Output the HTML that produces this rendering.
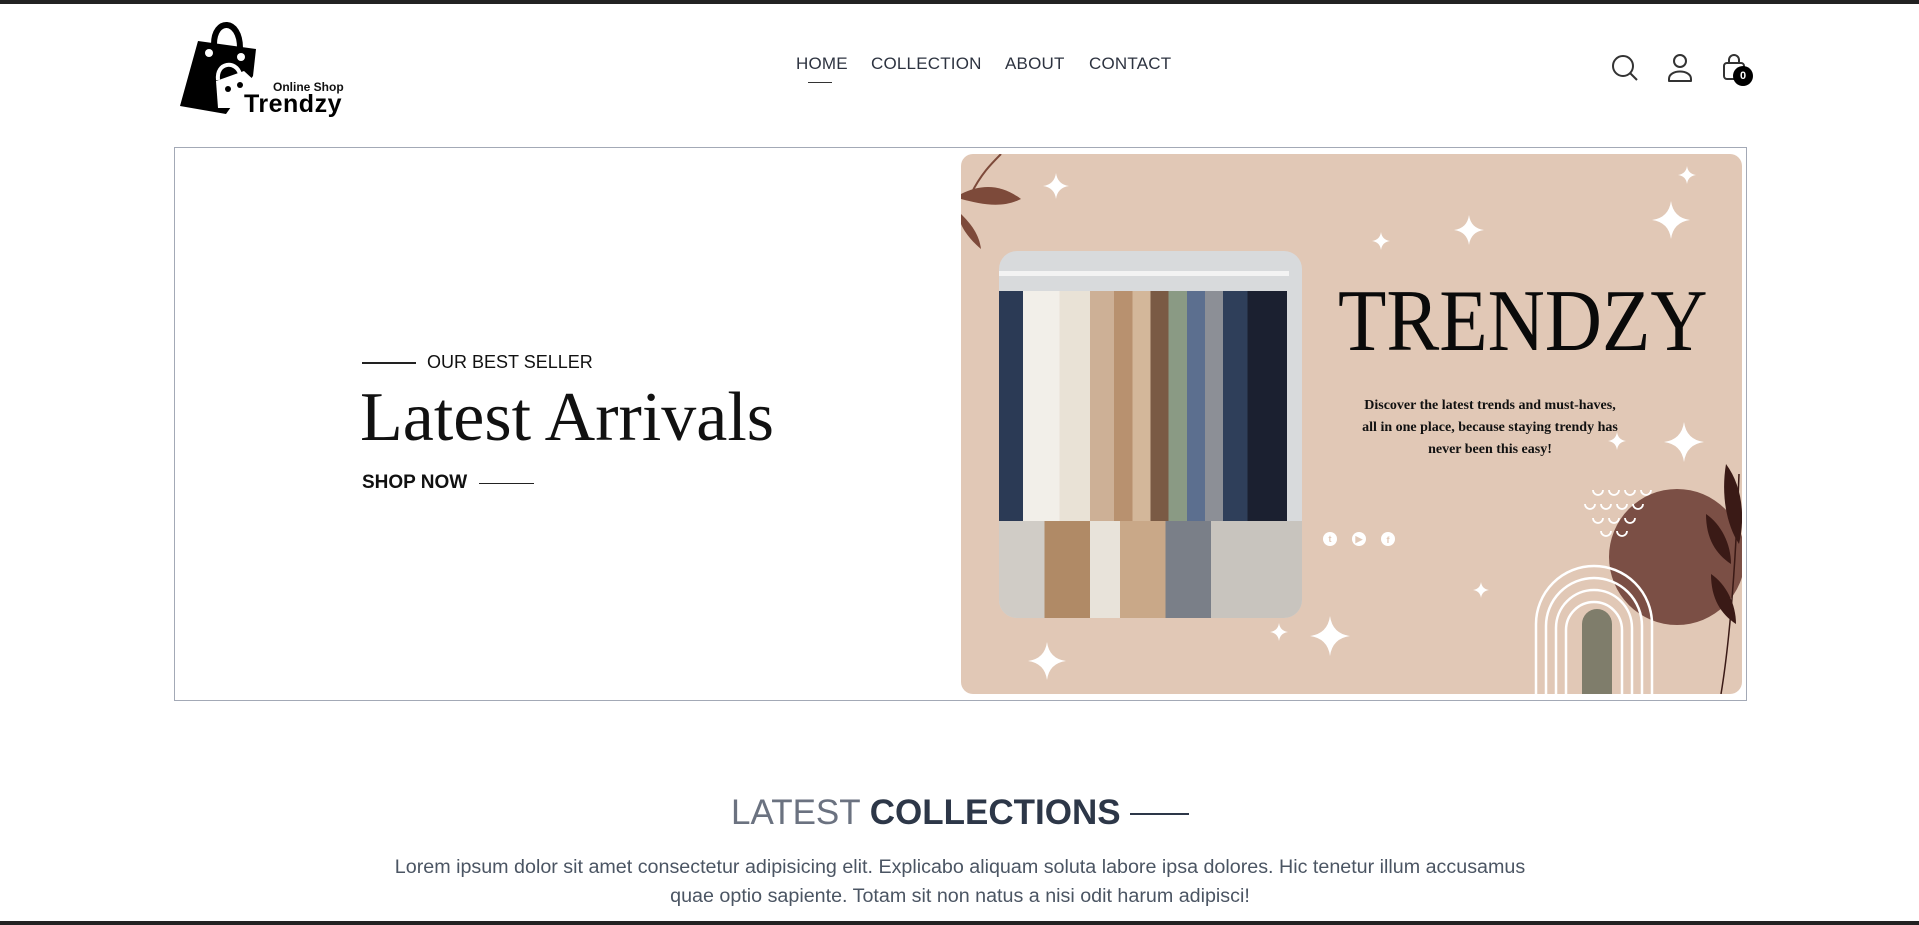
<!DOCTYPE html>
<html><head><meta charset="utf-8"><style>
*{margin:0;padding:0;box-sizing:border-box}
body{width:1919px;height:925px;background:#fff;position:relative;overflow:hidden;font-family:"Liberation Sans",sans-serif}
.a{position:absolute}
.nav{top:54px;font-size:17px;color:#2d3340;letter-spacing:0.2px}
</style></head><body>
<div class="a" style="left:0;top:0;width:1919px;height:4px;background:#222"></div>
<div class="a" style="left:0;top:921px;width:1919px;height:4px;background:#222"></div>

<!-- logo -->
<svg class="a" style="left:178px;top:16px" width="180" height="105" viewBox="0 0 180 105">
 <path d="M20 25 L78 33 L75 60 L48 98 L2 90 Z" fill="#000"/>
 <path d="M36 28 C36 2 62 2 62 32" stroke="#000" stroke-width="6" fill="none"/>
 <circle cx="31" cy="37" r="4" fill="#fff"/><circle cx="63" cy="41" r="4" fill="#fff"/>
 <path d="M38 65 L66 55 L78 66 L62 92 L40 92 Z" fill="#fff"/>
 <path d="M40 64 C38 46 58 44 62 58" stroke="#fff" stroke-width="4" fill="none"/>
 <circle cx="50" cy="73" r="3" fill="#000"/><circle cx="62" cy="69" r="3" fill="#000"/>
</svg>
<div class="a" style="left:273px;top:80px;font-size:12px;font-weight:bold;color:#111">Online Shop</div>
<div class="a" style="left:244px;top:90px;font-size:25px;font-weight:bold;color:#000;letter-spacing:0.5px">Trendzy</div>

<div class="a nav" style="left:796px">HOME</div>
<div class="a" style="left:808px;top:82px;width:24px;height:1px;background:#333"></div>
<div class="a nav" style="left:871px">COLLECTION</div>
<div class="a nav" style="left:1005px">ABOUT</div>
<div class="a nav" style="left:1089px">CONTACT</div>

<svg class="a" style="left:1610px;top:53px" width="30" height="30" viewBox="0 0 30 30"><circle cx="13" cy="13" r="10" stroke="#333" stroke-width="2" fill="none"/><path d="M20 20 L27 27" stroke="#333" stroke-width="2"/></svg>
<svg class="a" style="left:1666px;top:52px" width="28" height="32" viewBox="0 0 28 32"><circle cx="14" cy="9" r="6" stroke="#333" stroke-width="2" fill="none"/><path d="M3 27 C3 17 25 17 25 27 L25 29 L3 29 Z" stroke="#333" stroke-width="2" fill="none" stroke-linejoin="round"/></svg>
<svg class="a" style="left:1721px;top:52px" width="26" height="30" viewBox="0 0 26 30"><path d="M8 11 V8 a5 5 0 0 1 10 0 V11" stroke="#333" stroke-width="2" fill="none"/><rect x="3" y="11" width="20" height="16" rx="3" stroke="#333" stroke-width="2" fill="none"/></svg>
<div class="a" style="left:1733px;top:66px;width:20px;height:20px;border-radius:50%;background:#000;color:#fff;font-size:11px;font-weight:bold;text-align:center;line-height:20px">0</div>

<!-- hero -->
<div class="a" style="left:174px;top:147px;width:1573px;height:554px;border:1px solid #a3a9b6"></div>
<div class="a" style="left:362px;top:362px;width:54px;height:2px;background:#222"></div>
<div class="a" style="left:427px;top:352px;font-size:18px;color:#111">OUR BEST SELLER</div>
<div class="a" style="left:360px;top:378px;font-family:'Liberation Serif',serif;font-size:70px;color:#111">Latest Arrivals</div>
<div class="a" style="left:362px;top:472px;font-size:19px;font-weight:bold;color:#111">SHOP NOW</div>
<div class="a" style="left:479px;top:483px;width:55px;height:1px;background:#222"></div>

<div class="a" style="left:961px;top:154px;width:781px;height:540px;background:#e1c8b6;border-radius:12px;overflow:hidden">
 <div class="a" style="left:38px;top:97px;width:303px;height:367px;border-radius:18px;overflow:hidden;background:#d8dadc">
  <div class="a" style="left:0;top:20px;width:290px;height:5px;background:#f3f3f3"></div>
  <div class="a" style="left:0;top:40px;width:303px;height:240px;background:linear-gradient(90deg,#2b3a55 0 8%,#f2efe9 8% 20%,#e9e2d6 20% 30%,#cdb096 30% 38%,#b8916f 38% 44%,#d3b79a 44% 50%,#7a5a44 50% 56%,#8a9a84 56% 62%,#5c6f8f 62% 68%,#8c8f96 68% 74%,#2f3f5a 74% 82%,#1b2030 82% 95%,#d8dadc 95%)"></div>
  <div class="a" style="left:0;top:270px;width:303px;height:97px;background:linear-gradient(90deg,#d0ccc6 0 15%,#b08a66 15% 30%,#e8e3da 30% 40%,#c9a888 40% 55%,#7a7f88 55% 70%,#c8c4be 70%)"></div>
 </div>
 <div class="a" style="left:377px;top:124px;font-family:'Liberation Serif',serif;font-size:88px;color:#0a0a0a;transform:scaleX(0.9);transform-origin:left top;line-height:1">TRENDZY</div>
 <div class="a" style="left:379px;top:241px;width:300px;text-align:center;font-family:'Liberation Serif',serif;font-weight:bold;font-size:14px;line-height:22px;color:#111">Discover the latest trends and must-haves,<br>all in one place, because staying trendy has<br>never been this easy!</div>
 <svg class="a" style="left:0;top:0" width="781" height="540" viewBox="0 0 781 540">
  <defs><path id="s" d="M0 -1 Q0.12 -0.12 1 0 Q0.12 0.12 0 1 Q-0.12 0.12 -1 0 Q-0.12 -0.12 0 -1Z"/></defs>
  <g fill="#fff">
   <use href="#s" transform="translate(95,32) scale(13)"/>
   <use href="#s" transform="translate(508,76) scale(15)"/>
   <use href="#s" transform="translate(710,66) scale(19)"/>
   <use href="#s" transform="translate(726,21) scale(9)"/>
   <use href="#s" transform="translate(420,87) scale(9)"/>
   <use href="#s" transform="translate(723,288) scale(20)"/>
   <use href="#s" transform="translate(656,287) scale(9)"/>
   <use href="#s" transform="translate(86,507) scale(19)"/>
   <use href="#s" transform="translate(369,482) scale(20)"/>
   <use href="#s" transform="translate(318,478) scale(9)"/>
   <use href="#s" transform="translate(520,436) scale(8)"/>
  </g>
  <path d="M0 40 C20 30 40 30 60 45 C40 55 20 50 0 45Z" fill="#7d4a3a"/>
  <path d="M0 60 C10 70 18 80 20 95 C8 85 2 75 0 70Z" fill="#7d4a3a"/>
  <path d="M10 40 C20 20 30 10 40 0" stroke="#7d4a3a" stroke-width="2" fill="none"/>
  <circle cx="716" cy="403" r="68" fill="#7b4f45"/>
  <g stroke="#fff" stroke-width="2.5" fill="none">
   <path d="M575 540 V470 a58 58 0 0 1 116 0 V540"/>
   <path d="M585 540 V472 a48 48 0 0 1 96 0 V540"/>
   <path d="M595 540 V474 a38 38 0 0 1 76 0 V540"/>
   <path d="M605 540 V476 a28 28 0 0 1 56 0 V540"/>
  </g>
  <path d="M621 540 V470 a15 15 0 0 1 30 0 V540Z" fill="#7f7d6b"/>
  <g stroke="#fff" stroke-width="1.8" fill="none">
   <path d="M632 336 a5 5 0 0 0 10 0 M648 336 a5 5 0 0 0 10 0 M664 336 a5 5 0 0 0 10 0 M680 336 a5 5 0 0 0 10 0"/>
   <path d="M624 350 a5 5 0 0 0 10 0 M640 350 a5 5 0 0 0 10 0 M656 350 a5 5 0 0 0 10 0 M672 350 a5 5 0 0 0 10 0"/>
   <path d="M632 364 a5 5 0 0 0 10 0 M648 364 a5 5 0 0 0 10 0 M664 364 a5 5 0 0 0 10 0"/>
   <path d="M640 377 a5 5 0 0 0 10 0 M656 377 a5 5 0 0 0 10 0"/>
  </g>
  <g fill="#3a1a16">
   <path d="M765 310 C780 330 785 360 778 390 C765 370 760 340 765 310Z"/>
   <path d="M745 360 C760 370 770 390 770 410 C755 400 745 385 745 360Z"/>
   <path d="M750 420 C765 430 775 450 775 470 C760 460 750 445 750 420Z"/>
  </g>
  <path d="M778 320 C775 400 770 480 760 540" stroke="#3a1a16" stroke-width="1.5" fill="none"/>
  <g fill="#fff"><circle cx="369" cy="385" r="7"/><circle cx="398" cy="385" r="7"/><circle cx="427" cy="385" r="7"/></g>
  <g fill="#e1c8b6" font-size="9" font-family="Liberation Sans" font-weight="bold" text-anchor="middle"><text x="369" y="388">t</text><text x="398" y="388">▶</text><text x="427" y="389">f</text></g>
 </svg>
</div>

<div class="a" style="left:731px;top:793px;font-size:35px;color:#4b5563;white-space:nowrap"><span style="color:#6b7280">LATEST</span> <span style="color:#2d3748;font-weight:bold">COLLECTIONS</span></div>
<div class="a" style="left:1130px;top:813px;width:59px;height:2px;background:#2d3748"></div>
<div class="a" style="left:260px;top:853px;width:1400px;text-align:center;font-size:19.7px;line-height:29px;color:#4b5563">Lorem ipsum dolor sit amet consectetur adipisicing elit. Explicabo aliquam soluta labore ipsa dolores. Hic tenetur illum accusamus<br>quae optio sapiente. Totam sit non natus a nisi odit harum adipisci!</div>
</body></html>
